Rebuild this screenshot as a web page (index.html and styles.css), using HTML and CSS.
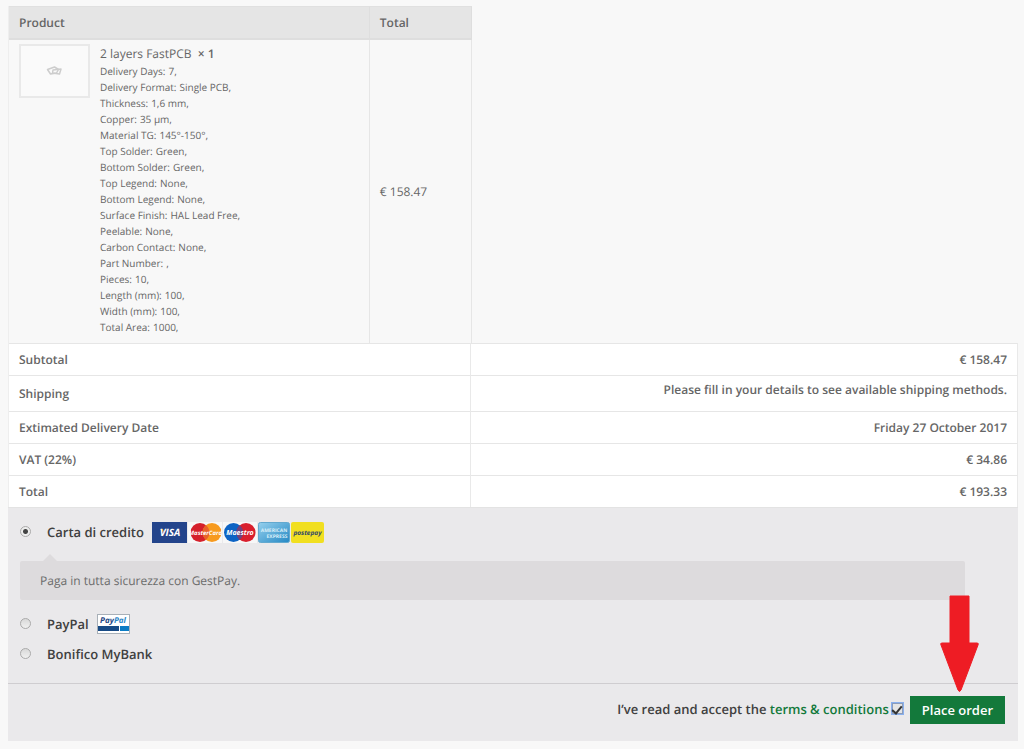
FILE: index.html
```
<!DOCTYPE html>
<html lang="en">
<head>
<meta charset="utf-8">
<title>Checkout</title>
<link rel="stylesheet" href="styles.css">
</head>
<body>
<main class="checkout">
  <table class="products">
    <thead>
      <tr><th class="product-col">Product</th><th>Total</th></tr>
    </thead>
    <tbody>
      <tr>
        <td>
          <div class="product">
            <svg class="thumb" viewBox="0 0 71 54" role="img" aria-label="2 layers FastPCB">
              <rect x="1" y="1" width="69" height="52" fill="#fafafa" stroke="#e9e9e9" stroke-width="2"/>
              <g fill="none" stroke="#cdcdcd" stroke-width="1.5" stroke-linejoin="round">
                <path d="M28.500 25.500l7-2.500 4 2.500-2 3.500-6 1z"/>
                <path d="M34 26l8-1-1.500 5-7-1z"/>
              </g>
            </svg>
            <div>
              <div class="product-name">2 layers FastPCB <strong class="quantity">× 1</strong></div>
              <dl class="options">
                <div><dt>Delivery Days:</dt><dd>7,</dd></div>
                <div><dt>Delivery Format:</dt><dd>Single PCB,</dd></div>
                <div><dt>Thickness:</dt><dd>1,6 mm,</dd></div>
                <div><dt>Copper:</dt><dd>35 µm,</dd></div>
                <div><dt>Material TG:</dt><dd>145°-150°,</dd></div>
                <div><dt>Top Solder:</dt><dd>Green,</dd></div>
                <div><dt>Bottom Solder:</dt><dd>Green,</dd></div>
                <div><dt>Top Legend:</dt><dd>None,</dd></div>
                <div><dt>Bottom Legend:</dt><dd>None,</dd></div>
                <div><dt>Surface Finish:</dt><dd>HAL Lead Free,</dd></div>
                <div><dt>Peelable:</dt><dd>None,</dd></div>
                <div><dt>Carbon Contact:</dt><dd>None,</dd></div>
                <div><dt>Part Number:</dt><dd>,</dd></div>
                <div><dt>Pieces:</dt><dd>10,</dd></div>
                <div><dt>Length (mm):</dt><dd>100,</dd></div>
                <div><dt>Width (mm):</dt><dd>100,</dd></div>
                <div><dt>Total Area:</dt><dd>1000,</dd></div>
              </dl>
            </div>
          </div>
        </td>
        <td class="price">€ 158.47</td>
      </tr>
    </tbody>
  </table>

  <table class="totals">
    <tbody>
      <tr><th scope="row">Subtotal</th><td>€ 158.47</td></tr>
      <tr class="shipping"><th scope="row">Shipping</th><td>Please fill in your details to see available shipping methods.</td></tr>
      <tr><th scope="row">Extimated Delivery Date</th><td>Friday 27 October 2017</td></tr>
      <tr><th scope="row">VAT (22%)</th><td>€ 34.86</td></tr>
      <tr><th scope="row">Total</th><td>€ 193.33</td></tr>
    </tbody>
  </table>

  <form class="payment">
    <div class="methods">
      <div class="method method-card">
        <input type="radio" name="payment" id="pay-card" checked>
        <label for="pay-card">Carta di credito</label>
        <svg class="cards" viewBox="0 0 173 21" role="img" aria-label="Visa, MasterCard, Maestro, American Express, Postepay">
          <rect width="35" height="21" fill="#23448b"/>
          <path d="M8 7h3l1 4z" fill="#e9a13b"/>
          <text x="18" y="14" class="logo-text" font-size="10" fill="#fff">VISA</text>
          <rect x="36" width="34" height="21" fill="#f7f7f7"/>
          <circle cx="48" cy="10.500" r="9.500" fill="#d5202b"/>
          <circle cx="60" cy="10.500" r="9.500" fill="#f79a1e"/>
          <path d="M54 3.200a9.500 9.500 0 0 1 0 14.600a9.500 9.500 0 0 1 0-14.600" fill="#e8612a"/>
          <text x="53.500" y="13" class="logo-text" font-size="6" fill="#fff">MasterCard</text>
          <rect x="71" width="34" height="21" fill="#f7f7f7"/>
          <circle cx="81.500" cy="10.500" r="9.500" fill="#0d63c4"/>
          <circle cx="94" cy="10.500" r="9.500" fill="#d91f2d"/>
          <path d="M87.800 3.300a9.500 9.500 0 0 1 0 14.400a9.500 9.500 0 0 1 0-14.400" fill="#70427c"/>
          <text x="88" y="13" class="logo-text" font-size="7" fill="#fff">Maestro</text>
          <defs>
            <linearGradient id="amex" x1="0" y1="0" x2="1" y2="1">
              <stop offset="0" stop-color="#95d0ed"/>
              <stop offset="1" stop-color="#2588c4"/>
            </linearGradient>
          </defs>
          <rect x="106.500" y=".5" width="31" height="20" rx="2" fill="url(#amex)" stroke="#63a9cf"/>
          <text x="122" y="10" class="logo-text amex-text" font-size="5">AMERICAN</text>
          <text x="125" y="16" class="logo-text amex-text" font-size="5">EXPRESS</text>
          <rect x="139" width="33" height="21" rx="2" fill="#f1df20"/>
          <text x="155.500" y="12.500" class="logo-text" font-size="6.5" fill="#30466b">postepay</text>
        </svg>
      </div>
      <div class="method-info">Paga in tutta sicurezza con GestPay.</div>
      <div class="method">
        <input type="radio" name="payment" id="pay-paypal">
        <label for="pay-paypal">PayPal</label>
        <svg class="paypal" viewBox="0 0 33 20" role="img" aria-label="PayPal">
          <rect x=".5" y=".5" width="32" height="19" fill="#fff" stroke="#a8b0b8"/>
          <text x="16" y="8.500" class="logo-text" font-size="8"><tspan fill="#1c4583">Pay</tspan><tspan fill="#2a86c7">Pal</tspan></text>
          <rect x="1" y="12" width="21" height="5" fill="#174a85"/>
          <rect x="23" y="12" width="9" height="5" fill="#0b7cc4"/>
        </svg>
      </div>
      <div class="method">
        <input type="radio" name="payment" id="pay-bank">
        <label for="pay-bank">Bonifico MyBank</label>
      </div>
    </div>
    <div class="place-order">
      <label for="terms">I’ve read and accept the <a href="#terms">terms &amp; conditions</a></label>
      <input type="checkbox" id="terms" checked>
      <div class="submit">
        <button type="submit">Place order</button>
        <svg class="arrow" viewBox="0 0 40 98" aria-hidden="true">
          <path d="M10 1h19v47h8q2 0 1 2L21 95q-1.500 3-3 0L1 50q-1-2 1-2h8z" fill="#ee1c24" stroke="#ee1c24"/>
        </svg>
      </div>
    </div>
  </form>
</main>
</body>
</html>
```
FILE: styles.css
```
* { box-sizing: border-box; }

body {
  margin: 0;
  padding: 6px 6px 8px 8px;
  background: #f8f8f8;
  color: #666;
  font: 12px/20px "Open Sans", sans-serif;
  text-rendering: geometricPrecision;
}

table {
  border-collapse: separate;
  border-spacing: 0;
  table-layout: fixed;
}

th, td {
  padding: 6px 10px 5px;
  text-align: left;
}

th, strong { font-weight: 600; }

.products {
  width: 45.9%;
  border-left: 1px solid #eee;
}

.products th {
  background: #e5e5e5;
  border-top: 1px solid #e0e0e0;
  border-right: 1px solid #dedede;
  border-bottom: 2px solid #dedede;
}

.products td {
  border-right: 1px solid #e6e6e6;
  padding-top: 4px;
  padding-bottom: 8px;
}

.product-col { width: 78%; }

.product {
  display: flex;
  align-items: flex-start;
  gap: 10px;
}

.thumb {
  width: 71px;
  height: 54px;
  flex: none;
}

.product-name { line-height: 19px; }
.quantity { margin-left: 3px; }
.products .price { padding: 8px 10px; vertical-align: middle; }

.options {
  margin: 0;
  font-size: 10px;
  line-height: 16px;
}

.options div { display: flex; gap: 3px; }
.options dt, .options dd { margin: 0; }

.totals {
  width: 100%;
  background: #fff;
  border-left: 1px solid #eee;
}

.totals th, .totals td {
  border-top: 1px solid #e6e6e6;
  border-right: 1px solid #e9e9e9;
  font-weight: 600;
}

.totals th { width: 45.8%; }
.totals td { text-align: right; }
.totals .shipping td { padding-top: 4px; padding-bottom: 11px; }

.payment {
  background: #eae9eb;
  border-top: 1px solid #e3e3e3;
  color: #404040;
  font-size: 13px;
}

.methods {
  padding: 12px 53px 14px 12px;
  border-bottom: 1px solid #cfcdd0;
}

.method {
  display: flex;
  align-items: center;
  height: 30px;
  font-weight: 600;
}

.method-card { height: 24px; }

.method input {
  appearance: none;
  flex: none;
  width: 11px;
  height: 11px;
  margin: 0 16px 2px 0;
  border: 1px solid #aaa;
  border-radius: 50%;
  background: linear-gradient(#d9d9d9, #f0f0f0);
}

.method input:checked {
  background: radial-gradient(circle, #444 0 2px, #ededed 3px);
}

.cards { width: 173px; height: 21px; margin-left: 8px; }
.paypal { width: 33px; height: 20px; margin-left: 8px; }

.logo-text {
  font-family: "Open Sans", sans-serif;
  font-weight: 700;
  font-style: italic;
  text-anchor: middle;
}

.amex-text { fill: #d8eef8; font-style: normal; }

.method-info {
  position: relative;
  margin: 17px 0 9px;
  padding: 10px 20px 9px;
  border-radius: 2px;
  background: #dddbdd;
  color: #6b6b6b;
  font-size: 12px;
}

.method-info::before {
  content: "";
  position: absolute;
  left: 23px;
  bottom: 100%;
  border: solid transparent;
  border-width: 0 7px 7px;
  border-bottom-color: #dddbdd;
}

.place-order {
  display: flex;
  align-items: center;
  justify-content: flex-end;
  padding: 12px 13px 17px;
  font-weight: 600;
}

.place-order label { margin-bottom: 3px; }
.place-order a { color: #13793b; text-decoration: none; }

.place-order input {
  width: 11px;
  height: 11px;
  margin: 0 7px 3px 3px;
  appearance: none;
  border: 1px solid #8b9cba;
  outline: 1px solid #8ab0ee;
  background: #e5e5e5;
  display: grid;
  place-items: center;
}

.place-order input:checked::before {
  content: "";
  width: 4px;
  height: 8px;
  border: solid #333;
  border-width: 0 2px 2px 0;
  transform: rotate(40deg);
}

.submit { position: relative; }

.submit button {
  display: block;
  padding: 4px 12px;
  border: 0;
  background: #13793b;
  color: #fff;
  font: 600 13px/20px "Open Sans", sans-serif;
}

.arrow {
  position: absolute;
  right: 25px;
  bottom: 31px;
  width: 40px;
  height: 98px;
}
```
